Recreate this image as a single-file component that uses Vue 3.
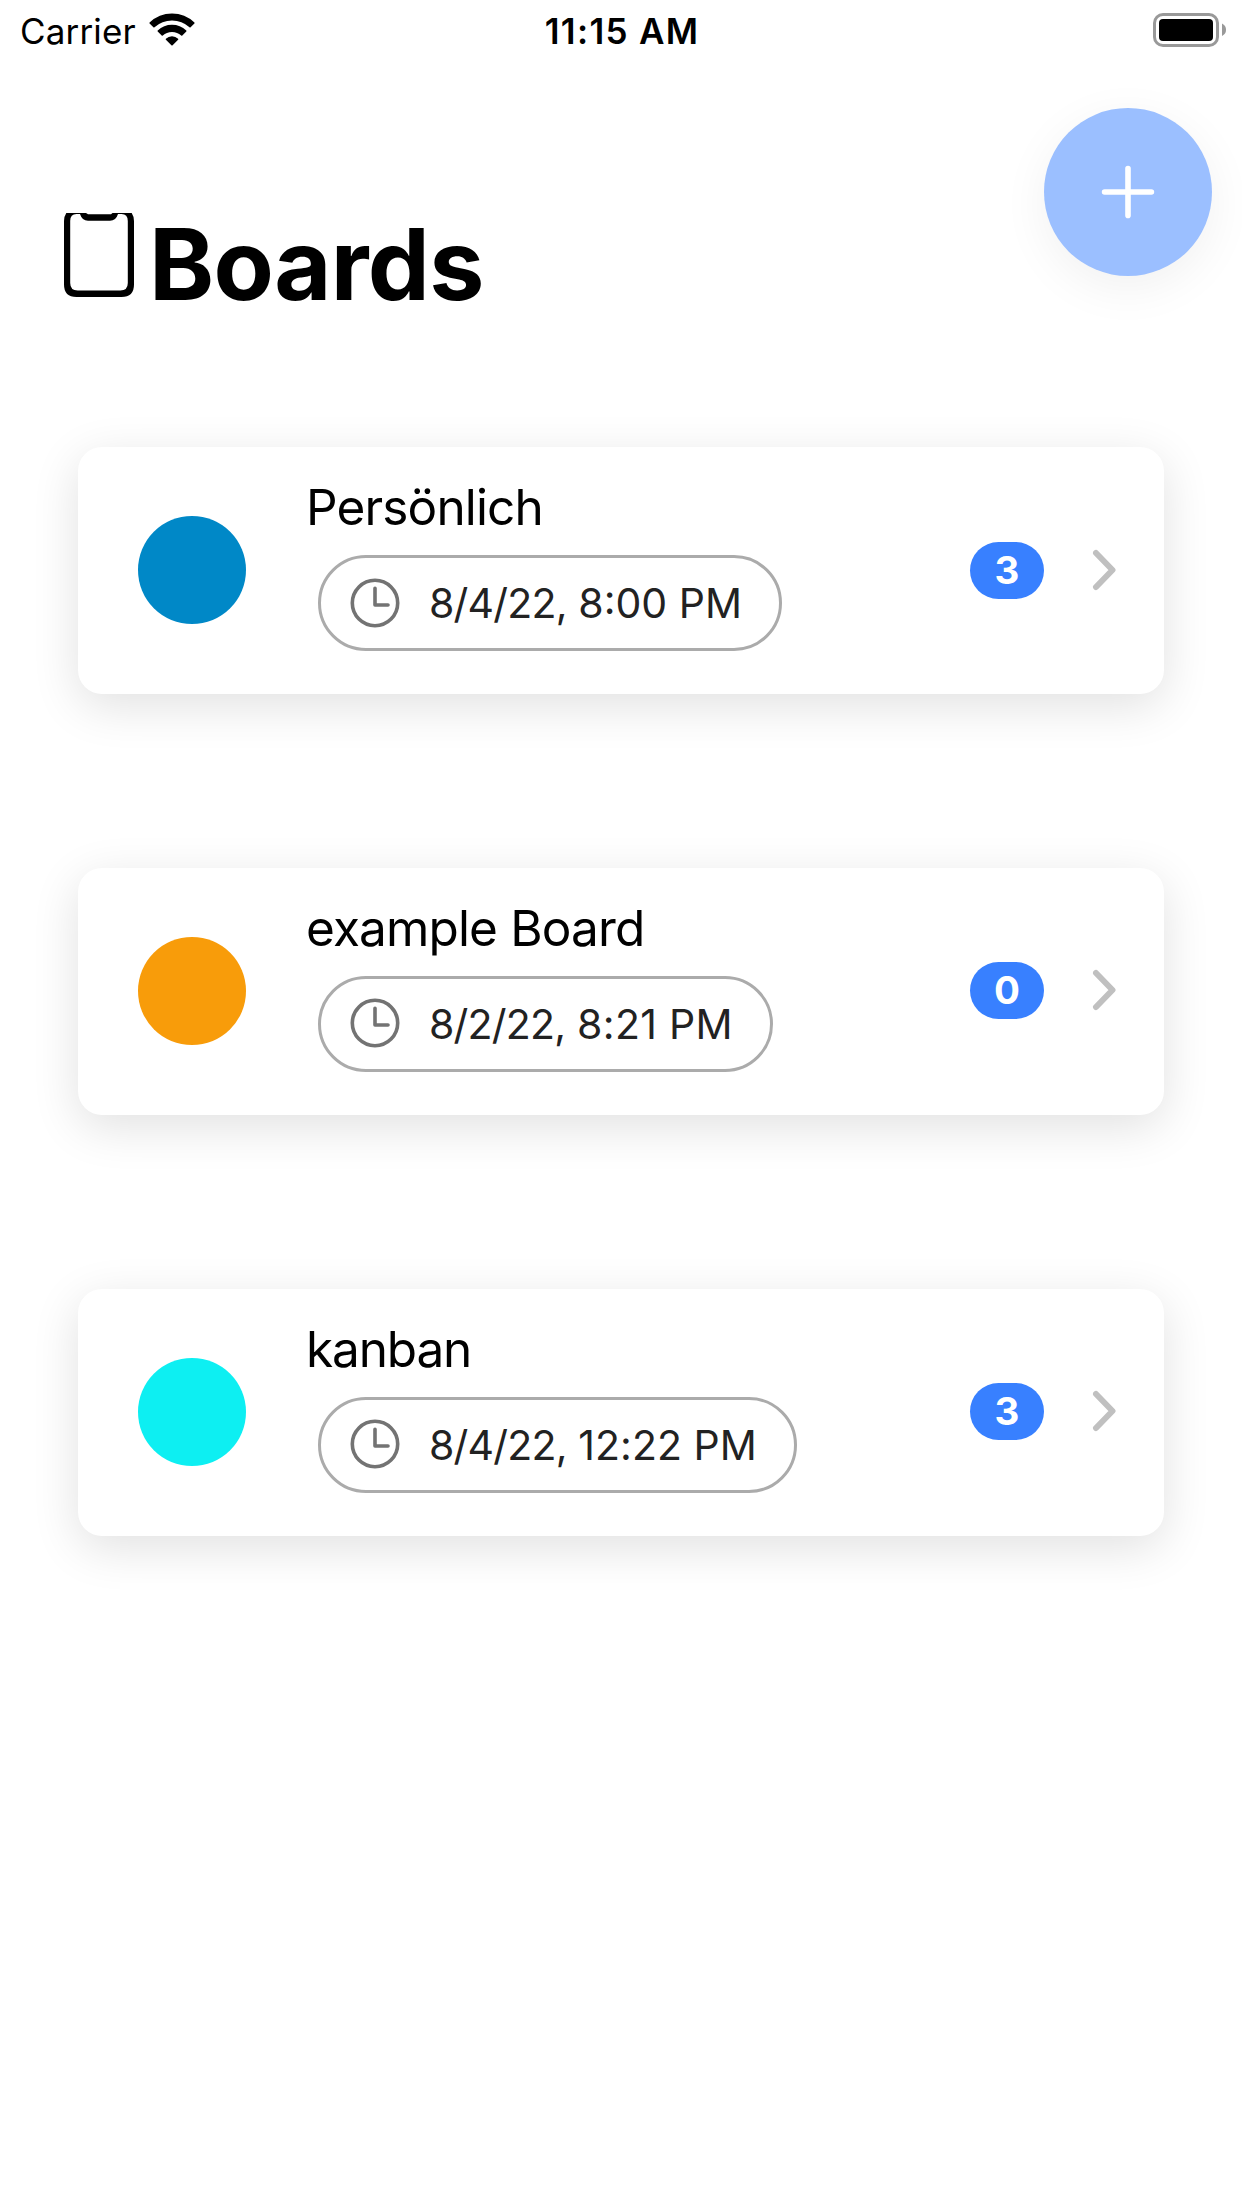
<script setup>
const boards = [
  { id: 'personal', name: 'Persönlich', date: '8/4/22,', time: '8:00 PM', color: '#0088c7', count: 3 },
  { id: 'example', name: 'example Board', date: '8/2/22,', time: '8:21 PM', color: '#f89c0a', count: 0 },
  { id: 'kanban', name: 'kanban', date: '8/4/22,', time: '12:22 PM', color: '#0deff2', count: 3 },
]
</script>

<template>
  <main class="screen">
    <div class="status">
      <div class="side">
        <span class="carrier">Carrier</span>
        <svg class="wifi" width="46" height="34" viewBox="0 0 46 34">
          <path d="M.6 9.4Q10 .4 23 .4T45.4 9.4Q45.9 9.9 45.4 10.4L41.6 14.2Q41.1 14.7 40.5 14.2Q33 7.4 23 7.4T5.5 14.2Q4.9 14.7 4.4 14.2L.6 10.4Q.1 9.9 .6 9.4Z" />
          <path d="M8.7 17.6Q14.7 11.7 23 11.7T37.3 17.6Q37.8 18.1 37.3 18.6L33.3 22.5Q32.8 23 32.2 22.5Q28.4 18.9 23 18.9T13.8 22.5Q13.2 23 12.7 22.5L8.7 18.6Q8.2 18.1 8.7 17.6Z" />
          <path d="M16.9 25.7Q19.4 23.2 23 23.2T29.1 25.7Q29.6 26.2 29.1 26.7L23.6 32.3Q23 32.9 22.4 32.3L16.9 26.7Q16.4 26.2 16.9 25.7Z" />
        </svg>
      </div>
      <span class="time">11:15 AM</span>
      <div class="side end">
        <svg width="74" height="34" viewBox="0 0 74 34">
          <rect x="1.5" y="1.5" width="63" height="31" rx="8.5" fill="none" stroke="#999" stroke-width="3" />
          <rect x="6" y="6" width="54" height="22" rx="4" />
          <path d="M69 10.5Q73 12.5 73 16.8T69 23Z" fill="#999" />
        </svg>
      </div>
    </div>

    <header class="header">
      <h1 class="heading">
        <svg class="phone" width="70" height="84" viewBox="0 0 70 84">
          <path fill-rule="evenodd" d="M2.3 0H67.7Q70 3.5 70 8V71.5Q70 84 57.5 84H12.5Q0 84 0 71.5V8Q0 3.5 2.3 0ZM16 1H12.5Q6.2 1 6.2 8V70Q6.2 77.5 13.7 77.5H56.3Q63.8 77.5 63.8 70V8Q63.8 1 57.5 1H54Q52 7.7 46 7.7H24Q18 7.7 16 1Z" />
          <path d="M22 0H48.5L47 1.2H24Z" fill="#fff" />
        </svg>
        <span>Boards</span>
      </h1>
      <button class="add" aria-label="+">
        <svg width="54" height="54" viewBox="0 0 54 54" fill="none" stroke="#fff" stroke-width="5.6" stroke-linecap="round">
          <path d="M27 3.6V50.4M3.6 27H50.4" />
        </svg>
      </button>
    </header>

    <section class="list">
      <article v-for="board in boards" :key="board.id" class="card">
        <span class="dot" :style="{ background: board.color }"></span>
        <div class="info">
          <h2 :class="['name', board.id]">{{ board.name }}</h2>
          <div :class="['chip', board.id]">
            <svg class="clock" width="50" height="50" viewBox="0 0 50 50" fill="none" stroke="#737373" stroke-width="3.6" stroke-linecap="round" stroke-linejoin="round">
              <circle cx="25" cy="25" r="22.7" />
              <path d="M25 10.2V27H38" />
            </svg>
            <span><span class="day">{{ board.date }}</span> {{ board.time }}</span>
          </div>
        </div>
        <span class="badge">{{ board.count }}</span>
        <svg class="chevron" width="24" height="42" viewBox="0 0 24 42" fill="none" stroke="#c0c0c0" stroke-width="6" stroke-linecap="round" stroke-linejoin="round">
          <path d="M4 4L20.5 21L4 38" />
        </svg>
      </article>
    </section>
  </main>
</template>

<style>
body {
  background: #fff;
}
</style>

<style scoped>
.screen {
  box-sizing: border-box;
  width: 1242px;
  height: 2208px;
  overflow: hidden;
  background: #fff;
  color: #000;
  font-family: Inter, "Liberation Sans", sans-serif;
}
.status {
  display: flex;
  align-items: center;
  height: 60px;
  padding: 0 15px 0 20px;
  font-size: 35px;
  line-height: 60px;
}
.side {
  display: flex;
  flex: 1;
  align-items: center;
  height: 60px;
}
.carrier {
  width: 129px;
  padding-top: 1px;
  letter-spacing: 0.15px;
}
.wifi {
  margin-bottom: 1px;
}
.end {
  justify-content: flex-end;
}
.time {
  padding: 1px 3px 0 0;
  font-weight: 600;
  letter-spacing: 1.3px;
  white-space: nowrap;
}
.header {
  display: flex;
  align-items: flex-start;
  justify-content: space-between;
  height: 387px;
  padding: 48px 30px 0 64px;
  box-sizing: border-box;
}
.heading {
  display: flex;
  align-items: flex-start;
  gap: 15px;
  margin: 105px 0 0;
  font-size: 98.5px;
  font-weight: 700;
  letter-spacing: -0.65px;
  line-height: 104px;
}
.add {
  display: flex;
  align-items: center;
  justify-content: center;
  width: 168px;
  height: 168px;
  padding: 0;
  border: 0;
  border-radius: 50%;
  background: #9bbfff;
  box-shadow: 0 12px 48px rgba(0, 0, 0, 0.06);
}
.list {
  display: flex;
  flex-direction: column;
  gap: 174px;
  padding: 0 78px;
}
.card {
  box-sizing: border-box;
  display: flex;
  align-items: center;
  height: 247px;
  padding: 0 48px 0 60px;
  border-radius: 24px;
  background: #fff;
  box-shadow: 0 12px 48px rgba(0, 0, 0, 0.12);
}
.dot {
  flex: none;
  width: 108px;
  height: 108px;
  margin-bottom: 1px;
  border-radius: 50%;
}
.info {
  flex: 1;
  align-self: stretch;
  padding: 30px 0 0 60px;
}
.name {
  margin: 0;
  font-size: 49.5px;
  font-weight: 400;
  letter-spacing: -0.85px;
  line-height: 60px;
  white-space: nowrap;
}
.name.kanban {
  letter-spacing: -1.15px;
}
.chip {
  box-sizing: border-box;
  display: flex;
  align-items: center;
  gap: 29px;
  width: 464px;
  height: 96px;
  margin: 18px 0 0 12px;
  padding-left: 29px;
  border: 3px solid #ababab;
  border-radius: 48px;
  color: #222;
  font-size: 41px;
  letter-spacing: 0;
  white-space: nowrap;
}
.day {
  letter-spacing: -0.78px;
}
.chip.example {
  width: 455px;
  letter-spacing: 0.3px;
}
.chip.kanban {
  width: 479px;
  letter-spacing: 0.03px;
}
.clock {
  flex: none;
  margin-bottom: 1px;
}
.badge {
  width: 74px;
  height: 57px;
  margin-bottom: 1px;
  border-radius: 28.5px;
  background: #3880ff;
  color: #fff;
  font-size: 38.5px;
  font-weight: 650;
  line-height: 57px;
  text-align: center;
}
.chevron {
  margin: 0 0 2px 48px;
}
.card + .card .clock,
.card + .card .badge {
  margin-bottom: 3px;
}
.card + .card .chevron {
  margin-bottom: 4px;
}
</style>
